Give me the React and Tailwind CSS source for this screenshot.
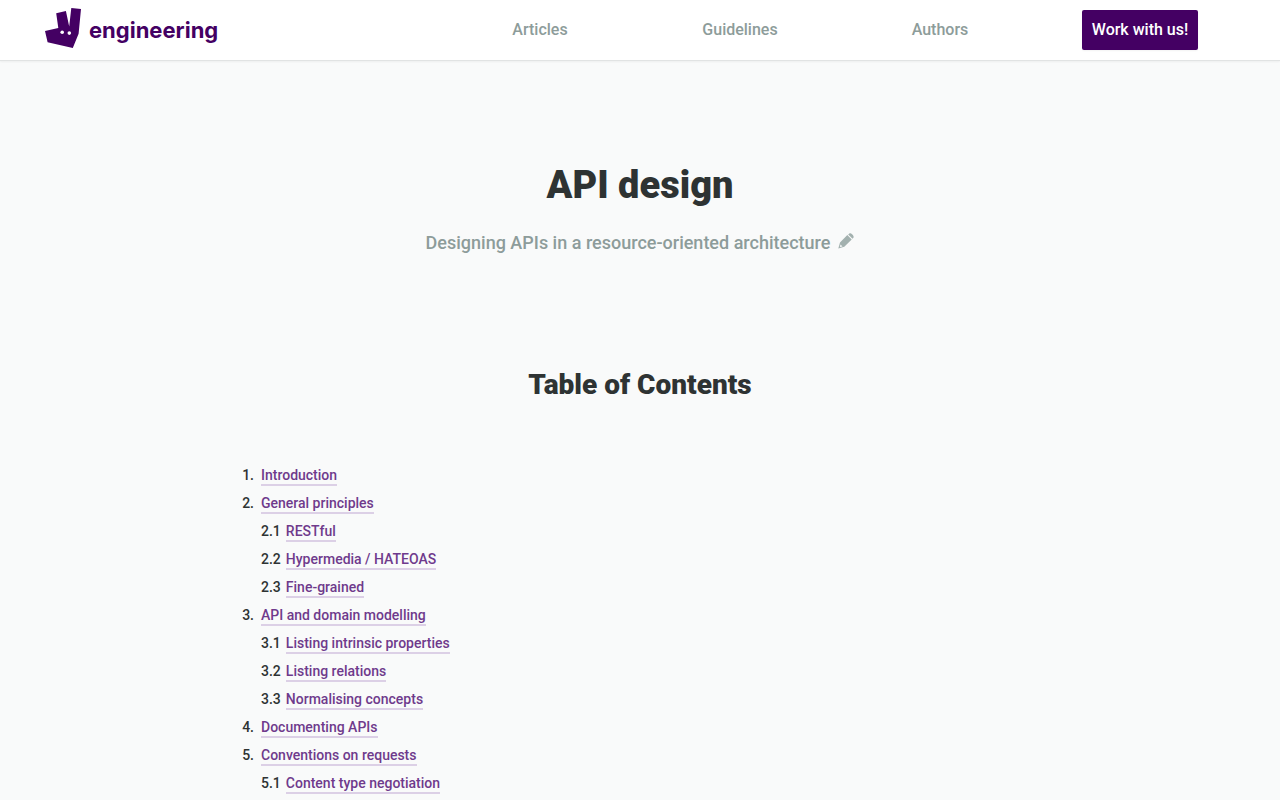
const NAV = ["Articles", "Guidelines", "Authors"];

const CONTENTS = [
  { title: "Introduction", items: [] },
  { title: "General principles", items: ["RESTful", "Hypermedia / HATEOAS", "Fine-grained"] },
  {
    title: "API and domain modelling",
    items: ["Listing intrinsic properties", "Listing relations", "Normalising concepts"],
  },
  { title: "Documenting APIs", items: [] },
  { title: "Conventions on requests", items: ["Content type negotiation"] },
];

function Logo() {
  return (
    <svg className="h-10 w-9 shrink-0" viewBox="0 0 36 40" aria-hidden="true">
      <path
        fill="#440063"
        d="M26.3 0L36 1L33.6 25.8L27.8 40L2.6 34.2L0 22.9L13.3 19.9L11.2 5.2L20.9 3L24.2 18.6Z"
      />
      <circle cx="17.2" cy="24.2" r="1.8" fill="#fff" />
      <circle cx="24.3" cy="25.1" r="1.8" fill="#fff" />
    </svg>
  );
}

function Pencil() {
  return (
    <svg className="h-4 w-4" viewBox="0 0 16 16" fill="#a3b1af" aria-hidden="true">
      <path d="M9.3 2.1L13.7 6.5L6.3 13.8L0.3 15.6L2 9.5ZM2.5 11.4L1.9 14L4.5 13.4Z" fillRule="evenodd" />
      <path d="M10.2 1.4L11.4 0.5C12.8-.4 16.4 3 15.5 4.6L14.5 5.7Z" />
    </svg>
  );
}

function TocLink({ children }) {
  const id = children.toLowerCase().replace(/[^a-z]+/g, "-");
  return (
    <a href={"#" + id} className="border-b-2 border-[#dcd0e6] pb-px text-[#6f3a8c] hover:border-[#6f3a8c]">
      {children}
    </a>
  );
}

export default function App() {
  return (
    <div className="min-h-screen bg-[#f9fafa] font-['Roboto','Liberation_Sans',sans-serif] text-[#2e3333]">
      <header className="border-b border-[#e1e3e3] bg-white shadow-xs">
        <div className="mx-auto flex h-15 max-w-300 items-center justify-between">
          <a href="#home" className="flex items-center gap-2 pb-1 pl-[5px] text-[#440063]">
            <Logo />
            <span className="pt-1 font-['Inter',sans-serif] text-[22px] leading-8 font-bold">engineering</span>
          </a>
          <nav className="grid w-2/3 grid-cols-4 items-center text-center text-base font-medium">
            {NAV.map((label) => (
              <a key={label} href={"#" + label.toLowerCase()} className="text-[#8d9c9a]">
                {label}
              </a>
            ))}
            <a
              href="#work"
              className="justify-self-center rounded-xs bg-[#440063] px-2.5 py-2 leading-6 whitespace-nowrap text-white shadow-xs"
            >
              Work with us!
            </a>
          </nav>
        </div>
      </header>

      <main className="mx-auto max-w-200">
        <div className="pt-24 text-center">
          <h1 className="text-[38px] leading-14 font-black">API design</h1>
          <p className="mt-4 flex items-center justify-center gap-2 text-lg leading-7 font-medium text-[#8d9c9a]">
            Designing APIs in a resource-oriented architecture
            <a href="#edit" aria-label="Edit this page" className="pb-1">
              <Pencil />
            </a>
          </p>
        </div>
        <h2 className="mt-27 text-center text-[28px] leading-10 font-black">Table of Contents</h2>
        <ol className="mt-14 pb-8 text-sm leading-7 font-medium">
          {CONTENTS.map((section, i) => (
            <li key={section.title}>
              <div className="flex leading-7">
                <span className="w-[14px] text-right">{i + 1}.</span>
                <span className="ml-[7px]">
                  <TocLink>{section.title}</TocLink>
                </span>
              </div>
              <ol className="ml-[21px]">
                {section.items.map((item, j) => (
                  <li key={item} className="flex gap-[5px] leading-7">
                    <span>
                      {i + 1}.{j + 1}
                    </span>
                    <span>
                      <TocLink>{item}</TocLink>
                    </span>
                  </li>
                ))}
              </ol>
            </li>
          ))}
        </ol>
      </main>
    </div>
  );
}
